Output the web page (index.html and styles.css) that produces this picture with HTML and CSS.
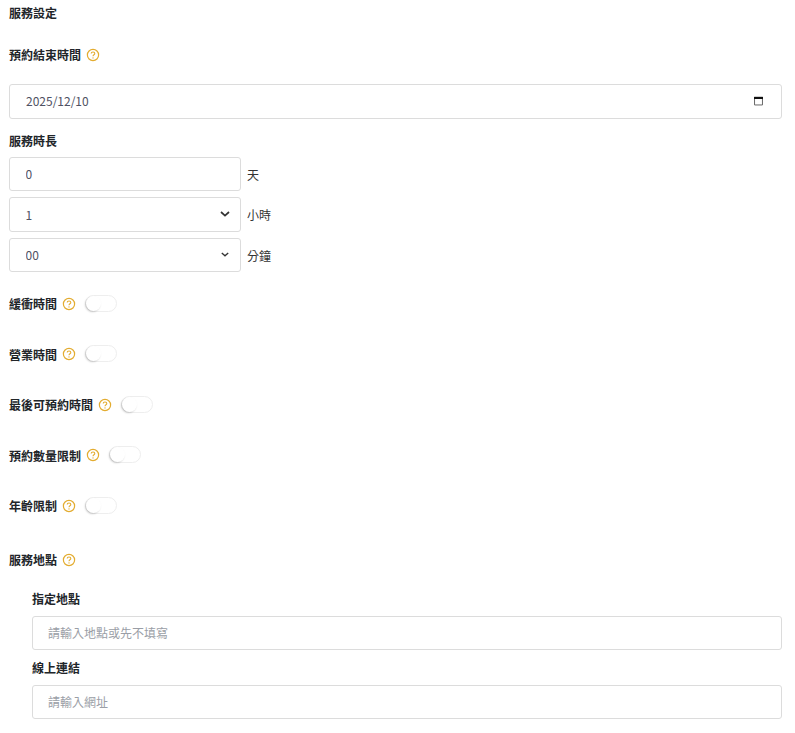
FILE: index.html
```html
<!DOCTYPE html>
<html lang="zh-Hant">
<head>
<meta charset="utf-8">
<title>服務設定</title>
<link rel="stylesheet" href="styles.css">
</head>
<body>
<svg class="defs" width="0" height="0" aria-hidden="true">
  <symbol id="help" viewBox="0 0 14 14">
    <circle cx="7" cy="7" r="5.6" fill="none" stroke="#e3ac30" stroke-width="1.2"/>
    <path d="M5.2 5.6c0-1 .8-1.6 1.8-1.6s1.8.6 1.8 1.5c0 1.3-1.8 1.3-1.8 2.7" fill="none" stroke="#e3ac30" stroke-width="1.1"/>
    <circle cx="7" cy="9.9" r=".7" fill="#e3ac30"/>
  </symbol>
</svg>
<main class="page">
  <h2 class="title">服務設定</h2>

  <div class="label-row end-label"><span class="label">預約結束時間</span><svg class="help"><use href="#help"/></svg></div>
  <div class="field date-field">
    <input class="input date-input" type="text" value="2025/12/10">
    <svg class="calendar" viewBox="0 0 10 10"><path d="M.6 1h8.8v8.4H.6z" fill="none" stroke="#666" stroke-width="1.1"/><path d="M0 .4h10v2.4H0z" fill="#111"/></svg>
  </div>

  <div class="label duration-label">服務時長</div>
  <div class="duration-row">
    <input class="input duration-input h34" type="text" value="0"><span class="unit">天</span>
  </div>
  <div class="duration-row">
    <div class="field duration-input">
      <select class="input select h35"><option>1</option></select>
      <svg class="chev big" viewBox="0 0 10 6"><path d="M1 1l4 3.6L9 1" fill="none" stroke="#333" stroke-width="1.7"/></svg>
    </div><span class="unit">小時</span>
  </div>
  <div class="duration-row">
    <div class="field duration-input">
      <select class="input select h34"><option>00</option></select>
      <svg class="chev small" viewBox="0 0 10 6"><path d="M1 1l4 3.6L9 1" fill="none" stroke="#333" stroke-width="1.7"/></svg>
    </div><span class="unit">分鐘</span>
  </div>

  <div class="toggles">
    <div class="label-row"><span class="label">緩衝時間</span><svg class="help"><use href="#help"/></svg><span class="toggle"></span></div>
    <div class="label-row"><span class="label">營業時間</span><svg class="help"><use href="#help"/></svg><span class="toggle"></span></div>
    <div class="label-row"><span class="label">最後可預約時間</span><svg class="help"><use href="#help"/></svg><span class="toggle"></span></div>
    <div class="label-row"><span class="label">預約數量限制</span><svg class="help"><use href="#help"/></svg><span class="toggle"></span></div>
    <div class="label-row"><span class="label">年齡限制</span><svg class="help"><use href="#help"/></svg><span class="toggle"></span></div>
  </div>

  <div class="label-row location-label"><span class="label">服務地點</span><svg class="help"><use href="#help"/></svg></div>
  <div class="location">
    <div class="label sub-label">指定地點</div>
    <input class="input h34" type="text" placeholder="請輸入地點或先不填寫">
    <div class="label sub-label second">線上連結</div>
    <input class="input h34" type="text" placeholder="請輸入網址">
  </div>
</main>
</body>
</html>
```
FILE: styles.css
```css
* { box-sizing: border-box; }
html, body { margin: 0; padding: 0; background: #fff; }
body {
  font-family: "Noto Sans CJK TC", "Noto Sans", sans-serif;
  font-size: 12px;
  color: #212529;
}
.defs { position: absolute; }
.page { padding: 4px 13px 0 9px; display: flex; flex-direction: column; }
.title { margin: 0; font-size: 12px; line-height: 18px; font-weight: 700; }
.label { font-weight: 700; font-size: 12px; line-height: 18px; color: #212529; }
.label-row { display: flex; align-items: center; height: 18px; }
.help { width: 14px; height: 14px; margin-left: 5px; margin-bottom: 1px; flex: none; }
.end-label { margin-top: 24px; }
.field { position: relative; }
.date-field { margin-top: 20px; }
.input {
  display: block;
  width: 100%;
  height: 35px;
  padding: 0 15px 1px 15.5px;
  border: 1px solid #dcdcdc;
  border-radius: 3px;
  background: #fff;
  font: 12px "Noto Sans CJK TC", "Noto Sans", sans-serif;
  color: #4f5263;
  outline: none;
}
.input::placeholder { color: #9a9ea6; opacity: 1; }
.date-input { padding: 0 15px 2px 16px; }
.location .input { padding-left: 15px; }
.h34 { height: 34px; }
.h35 { height: 35px; }
.select { appearance: none; -webkit-appearance: none; }
.calendar { position: absolute; right: 19px; top: 12px; width: 9px; height: 10px; }
.chev { position: absolute; pointer-events: none; }
.chev.big { right: 11px; top: 14px; width: 10px; height: 6px; }
.chev.small { right: 12px; top: 14px; width: 8px; height: 5px; }
.duration-label { margin-top: 13px; }
.duration-row { display: flex; align-items: center; gap: 6px; margin-top: 6px; }
.duration-label + .duration-row { margin-top: 7px; }
.duration-input { width: 232px; flex: none; }
.unit { font-size: 12px; color: #333; }
.toggles { display: flex; flex-direction: column; gap: 32.5px; margin-top: 23px; }
.toggle {
  width: 32px;
  height: 17px;
  margin-left: 9px;
  margin-bottom: 2px;
  border: 1px solid #eeeeee;
  border-radius: 9px;
  background: #fff;
  position: relative;
  flex: none;
}
.toggle::before {
  content: "";
  position: absolute;
  left: 0;
  top: 0;
  width: 15px;
  height: 15px;
  border-radius: 50%;
  background: #fff;
  box-shadow: -1px 1px 2px rgba(0,0,0,.2);
}
.location-label { margin-top: 36px; }
.location { padding-left: 23px; margin-top: 21px; display: flex; flex-direction: column; }
.sub-label { margin-bottom: 8px; }
.second { margin-top: 9px; margin-bottom: 8px; }
```
